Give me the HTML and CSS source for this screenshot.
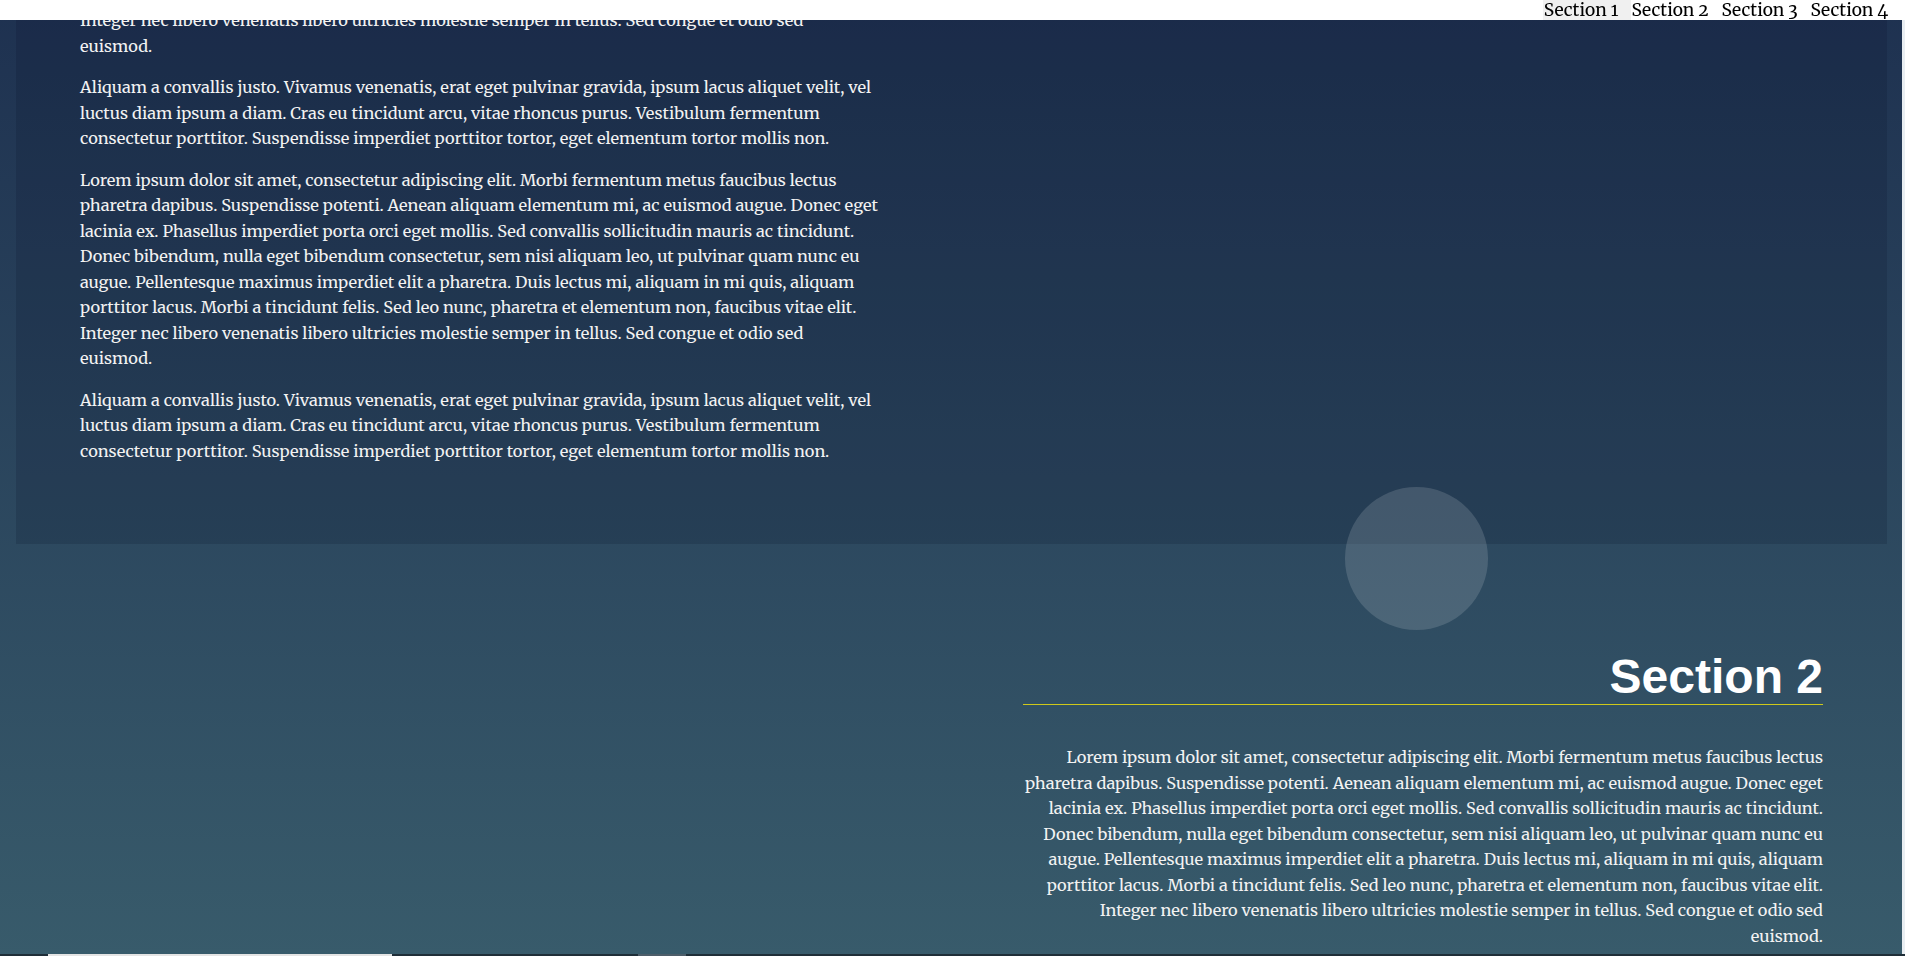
FILE: index.html
```html
<!DOCTYPE html>
<html lang="en">
<head>
<meta charset="utf-8">
<title>Sections</title>
<link rel="stylesheet" href="styles.css">
</head>
<body>
<nav class="topnav">
  <ul>
    <li><a class="active" href="#s1">Section 1</a></li>
    <li><a href="#s2">Section 2</a></li>
    <li><a href="#s3">Section 3</a></li>
    <li><a href="#s4">Section 4</a></li>
  </ul>
</nav>
<main class="page">
  <section class="section section-1" id="s1">
    <div class="col">
      <p>Integer nec libero venenatis libero ultricies molestie semper in tellus. Sed congue et odio sed<br>euismod.</p>
      <p>Aliquam a convallis justo. Vivamus venenatis, erat eget pulvinar gravida, ipsum lacus aliquet velit, vel<br>luctus diam ipsum a diam. Cras eu tincidunt arcu, vitae rhoncus purus. Vestibulum fermentum<br>consectetur porttitor. Suspendisse imperdiet porttitor tortor, eget elementum tortor mollis non.</p>
      <p>Lorem ipsum dolor sit amet, consectetur adipiscing elit. Morbi fermentum metus faucibus lectus<br>pharetra dapibus. Suspendisse potenti. Aenean aliquam elementum mi, ac euismod augue. Donec eget<br>lacinia ex. Phasellus imperdiet porta orci eget mollis. Sed convallis sollicitudin mauris ac tincidunt.<br>Donec bibendum, nulla eget bibendum consectetur, sem nisi aliquam leo, ut pulvinar quam nunc eu<br>augue. Pellentesque maximus imperdiet elit a pharetra. Duis lectus mi, aliquam in mi quis, aliquam<br>porttitor lacus. Morbi a tincidunt felis. Sed leo nunc, pharetra et elementum non, faucibus vitae elit.<br>Integer nec libero venenatis libero ultricies molestie semper in tellus. Sed congue et odio sed<br>euismod.</p>
      <p>Aliquam a convallis justo. Vivamus venenatis, erat eget pulvinar gravida, ipsum lacus aliquet velit, vel<br>luctus diam ipsum a diam. Cras eu tincidunt arcu, vitae rhoncus purus. Vestibulum fermentum<br>consectetur porttitor. Suspendisse imperdiet porttitor tortor, eget elementum tortor mollis non.</p>
    </div>
  </section>
  <div class="bubble" aria-hidden="true"></div>
  <section class="section section-2" id="s2">
    <div class="col">
      <h2>Section 2</h2>
      <p>Lorem ipsum dolor sit amet, consectetur adipiscing elit. Morbi fermentum metus faucibus lectus<br>pharetra dapibus. Suspendisse potenti. Aenean aliquam elementum mi, ac euismod augue. Donec eget<br>lacinia ex. Phasellus imperdiet porta orci eget mollis. Sed convallis sollicitudin mauris ac tincidunt.<br>Donec bibendum, nulla eget bibendum consectetur, sem nisi aliquam leo, ut pulvinar quam nunc eu<br>augue. Pellentesque maximus imperdiet elit a pharetra. Duis lectus mi, aliquam in mi quis, aliquam<br>porttitor lacus. Morbi a tincidunt felis. Sed leo nunc, pharetra et elementum non, faucibus vitae elit.<br>Integer nec libero venenatis libero ultricies molestie semper in tellus. Sed congue et odio sed<br>euismod.</p>
    </div>
  </section>
</main>
<div class="bottom-strip" aria-hidden="true"><span class="seg seg-light"></span><span class="seg seg-gray"></span></div>
</body>
</html>
```
FILE: styles.css
```css
* { box-sizing: border-box; }
html, body { margin: 0; padding: 0; }
body {
  background: #e9eef2;
  font-family: "Merriweather", "Noto Serif", "DejaVu Serif", serif;
  overflow: hidden;
}
.topnav {
  position: fixed;
  top: 0; left: 0; right: 0;
  height: 20px;
  background: #fff;
  z-index: 10;
  display: flex;
  justify-content: flex-end;
}
.topnav ul {
  list-style: none;
  margin: 0;
  padding: 0 5px 0 0;
  display: flex;
}
.topnav a {
  display: block;
  padding: 0 12px 0 1px;
  line-height: 20px;
  font-size: 17.4px;
  font-variant-numeric: oldstyle-nums;
  color: #000;
  text-decoration: none;
}
.topnav a.active { background: #f0f0f0; }
.page {
  position: relative;
  height: 100vh;
  overflow: hidden;
  margin-right: 3px;
  background: linear-gradient(#1e3150, #385b6b);
}
.section {
  margin: 0 15px 0 16px;
  padding: 0 64px;
  color: #f2f2f2;
}
.section-1 {
  background: rgba(8, 14, 40, 0.16);
  padding-top: 8px;
  padding-bottom: 64px;
}
.section-2 {
  padding-top: 105px;
  display: flex;
  justify-content: flex-end;
}
.col { width: 800px; }
.section-2 .col { text-align: right; }
.section p {
  margin: 0 0 16px;
  font-size: 16.4px;
  line-height: 25.5px;
}
.section h2 {
  margin: 0 0 40px;
  font: bold 48px/55px "Liberation Sans", Arial, sans-serif;
  color: #fff;
  border-bottom: 1px solid #cfc81a;
}
.bubble {
  position: absolute;
  left: 1345px;
  top: 487px;
  width: 143px;
  height: 143px;
  border-radius: 50%;
  background: rgba(255, 255, 255, 0.14);
}
.bottom-strip {
  position: fixed;
  left: 0; right: 0; bottom: 0;
  height: 2px;
  background: #1f2e38;
  display: flex;
  padding-left: 48px;
}
.seg { display: block; height: 2px; }
.seg-light { width: 344px; background: #e4e4e4; }
.seg-gray { width: 48px; margin-left: 246px; background: #4d5d69; }
```
